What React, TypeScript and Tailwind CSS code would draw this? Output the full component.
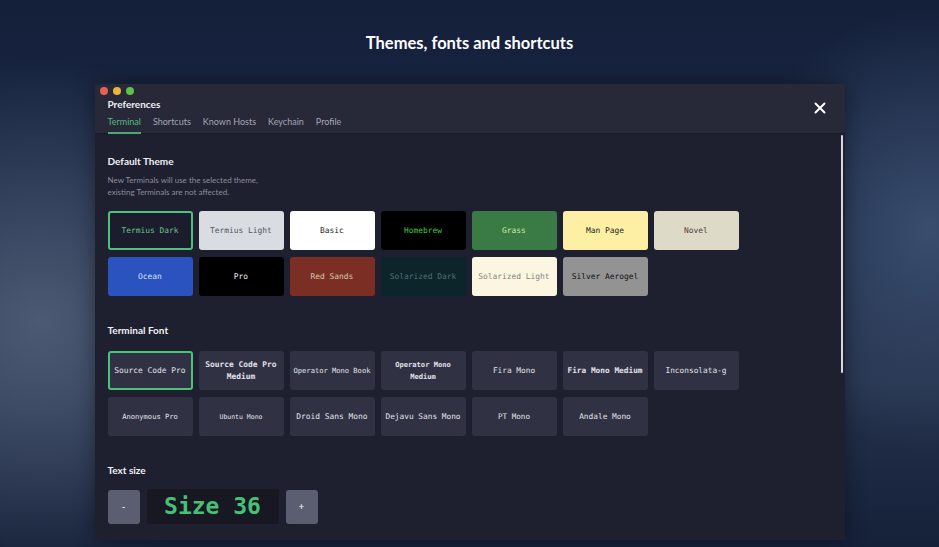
import React from "react";

type Tile = { name: string; bg: string; fg: string };

const themes: Tile[] = [
  { name: "Termius Dark", bg: "bg-[#1b1d2c]", fg: "text-[#6cc08d]" },
  { name: "Termius Light", bg: "bg-[#d9dde2]", fg: "text-[#505660]" },
  { name: "Basic", bg: "bg-white", fg: "text-[#222]" },
  { name: "Homebrew", bg: "bg-black", fg: "text-[#3fc93f]" },
  { name: "Grass", bg: "bg-[#3a7b45]", fg: "text-[#d3e9a9]" },
  { name: "Man Page", bg: "bg-[#fdf0a4]", fg: "text-[#1c1c1c]" },
  { name: "Novel", bg: "bg-[#dedac8]", fg: "text-[#4f4135]" },
  { name: "Ocean", bg: "bg-[#2b53bf]", fg: "text-[#d8e0f5]" },
  { name: "Pro", bg: "bg-black", fg: "text-[#eeeeee]" },
  { name: "Red Sands", bg: "bg-[#7b2f24]", fg: "text-[#dac9a8]" },
  { name: "Solarized Dark", bg: "bg-[#0b252b]", fg: "text-[#5a6c70]" },
  { name: "Solarized Light", bg: "bg-[#fcf5e0]", fg: "text-[#7c8688]" },
  { name: "Silver Aerogel", bg: "bg-[#939393]", fg: "text-[#111]" },
];

const fonts: { name: string; cls: string }[] = [
  { name: "Source Code Pro", cls: "text-[7.9px]" },
  { name: "Source Code Pro Medium", cls: "text-[7.9px] font-semibold" },
  { name: "Operator Mono Book", cls: "text-[7.1px]" },
  { name: "Operator Mono Medium", cls: "text-[7.1px] font-bold" },
  { name: "Fira Mono", cls: "text-[7.8px]" },
  { name: "Fira Mono Medium", cls: "text-[7.8px] font-bold" },
  { name: "Inconsolata-g", cls: "text-[7.8px]" },
  { name: "Anonymous Pro", cls: "text-[7.1px]" },
  { name: "Ubuntu Mono", cls: "text-[6.5px]" },
  { name: "Droid Sans Mono", cls: "text-[7.9px]" },
  { name: "Dejavu Sans Mono", cls: "text-[7.8px]" },
  { name: "PT Mono", cls: "text-[7.6px]" },
  { name: "Andale Mono", cls: "text-[7.8px]" },
];

const tabs = ["Terminal", "Shortcuts", "Known Hosts", "Keychain", "Profile"];

const mono = "font-['DejaVu_Sans_Mono','Liberation_Mono',monospace]";

export default function App() {
  return (
    <div className="relative flex h-[547px] w-[939px] flex-col items-center overflow-hidden bg-[#16223d] font-['Lato','Noto_Sans',sans-serif]">
      <div className="pointer-events-none absolute inset-0 bg-[radial-gradient(ellipse_260px_260px_at_40px_320px,rgba(90,104,128,0.75),transparent),radial-gradient(ellipse_200px_220px_at_930px_230px,rgba(70,92,125,0.7),transparent),linear-gradient(180deg,#14203a_0%,#1c2a48_45%,#25324c_70%,#152039_100%)]" />

      <h1 className="relative mt-[33px] text-[16.5px] font-bold leading-[20px] text-white">
        Themes, fonts and shortcuts
      </h1>

      <div className="relative mt-[31px] flex h-[456px] w-[750px] flex-col overflow-hidden rounded-t-[3px] shadow-[0_0_20px_rgba(0,0,0,0.4)]">
        {/* header */}
        <div className="relative flex h-[50px] shrink-0 flex-col border-b border-[#1a1b28] bg-[#272838]">
          <div className="flex gap-[5px] pl-[5px] pt-[3px]">
            <span className="size-[8px] rounded-full bg-[#ec5f57]" />
            <span className="size-[8px] rounded-full bg-[#e8b43a]" />
            <span className="size-[8px] rounded-full bg-[#5cc34a]" />
          </div>
          <div className="mt-[3px] pl-[13px] text-[10px] font-bold leading-[12px] text-[#eceef5]">
            Preferences
          </div>
          <div className="mt-[6px] flex gap-[12px] pl-[13px]">
            {tabs.map((t, i) => (
              <div
                key={t}
                className={
                  i === 0
                    ? "border-b-2 border-[#4aa873] pb-[4px] text-[9px] leading-[12px] text-[#56b884]"
                    : "border-b-2 border-transparent pb-[4px] text-[9px] leading-[12px] text-[#a3a6b8]"
                }
              >
                {t}
              </div>
            ))}
          </div>
          <svg
            className="absolute right-[19px] top-[18px]"
            width="12"
            height="12"
            viewBox="0 0 12 12"
          >
            <path d="M1.5 1.5 L10.5 10.5 M10.5 1.5 L1.5 10.5" stroke="white" strokeWidth="2" strokeLinecap="round" />
          </svg>
        </div>

        {/* body */}
        <div className="flex flex-1 bg-[#1e1f2f]">
          <div className="flex flex-1 flex-col pl-[13px] pt-[21px]">
            <div className="text-[10px] font-bold leading-[12px] text-[#f0f1f6]">Default Theme</div>
            <div className="mt-[7px] text-[8px] leading-[12px] text-[#8a8d9f]">
              New Terminals will use the selected theme,
              <br />
              existing Terminals are not affected.
            </div>

            <div className="mt-[13px] grid grid-cols-[repeat(7,85px)] gap-x-[6px] gap-y-[7px]">
              {themes.map((t, i) => (
                <div
                  key={t.name}
                  className={`flex h-[39px] items-center justify-center rounded-[3px] ${t.bg} ${t.fg} ${mono} text-[7.9px] ${
                    i === 0 ? "border-2 border-[#4cc27c]" : ""
                  }`}
                >
                  {t.name}
                </div>
              ))}
            </div>

            <div className="mt-[28px] text-[10px] font-bold leading-[12px] text-[#f0f1f6]">Terminal Font</div>

            <div className="mt-[15px] grid grid-cols-[repeat(7,85px)] gap-x-[6px] gap-y-[7px]">
              {fonts.map((f, i) => (
                <div
                  key={f.name}
                  className={`flex h-[39px] items-center justify-center rounded-[3px] bg-[#303244] text-center leading-[12px] text-[#e2e3ea] ${mono} ${f.cls} ${
                    i === 0 ? "border-2 border-[#4cc27c] bg-[#25273a]" : ""
                  }`}
                >
                  {f.name}
                </div>
              ))}
            </div>

            <div className="mt-[28px] text-[10px] font-bold leading-[12px] text-[#f0f1f6]">Text size</div>

            <div className="mt-[13px] flex items-center gap-[7px]">
              <button className="flex h-[34px] w-[32px] items-center justify-center rounded-[3px] bg-[#5b5d71] text-[10px] text-white">
                -
              </button>
              <div className={`flex h-[35px] w-[132px] items-center justify-center rounded-[3px] bg-[#171822] ${mono} text-[23px] font-bold text-[#45c277]`}>
                Size 36
              </div>
              <button className="flex h-[34px] w-[32px] items-center justify-center rounded-[3px] bg-[#5b5d71] text-[10px] text-white">
                +
              </button>
            </div>
          </div>

          <div className="flex w-[4px] shrink-0 justify-start pt-[1px]">
            <div className="h-[238px] w-[2px] rounded-full bg-[#d6d7e2]" />
          </div>
        </div>
      </div>
    </div>
  );
}
